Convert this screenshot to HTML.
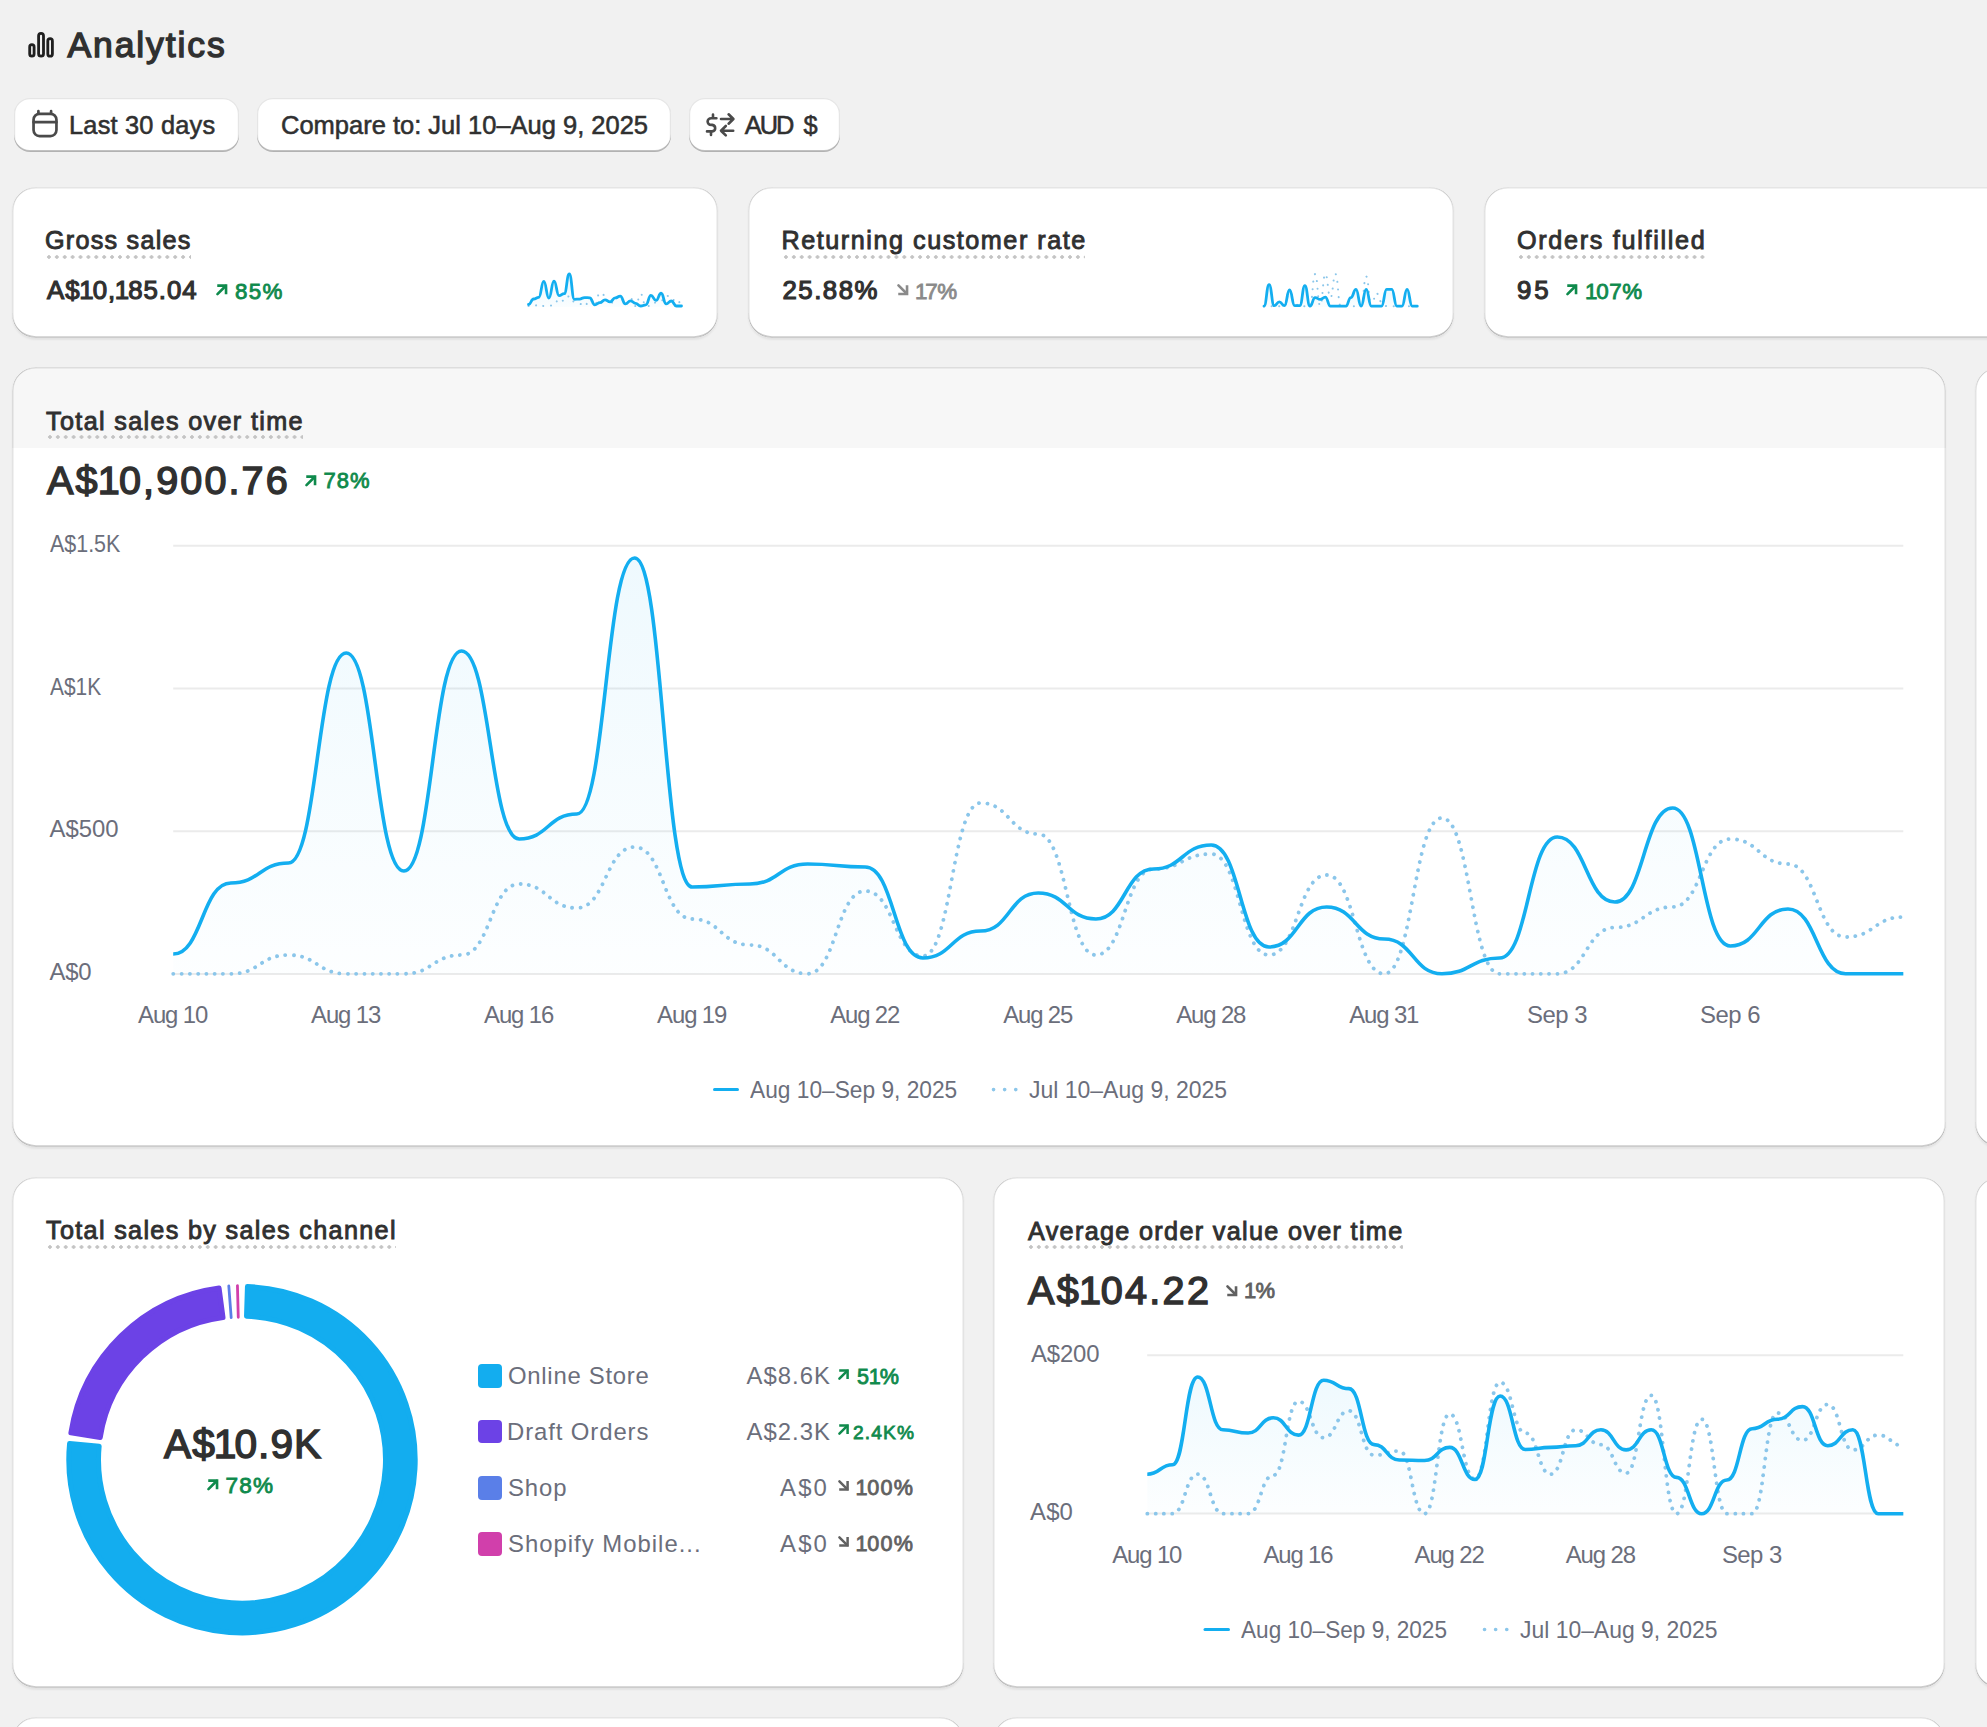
<!DOCTYPE html>
<html><head><meta charset="utf-8"><title>Analytics</title>
<style>
html,body{margin:0;padding:0;}
body{width:1987px;height:1727px;overflow:hidden;background:#f1f1f1;position:relative;font-family:"Liberation Sans",sans-serif;}
.t{position:absolute;white-space:nowrap;line-height:1.117;}
.n1{margin:0 -0.07em 0 -0.05em;}
.card{position:absolute;background:#fff;border-radius:24px;box-shadow:0 1.5px 2px rgba(0,0,0,.06);overflow:hidden;}
.card::after{content:'';position:absolute;left:0;top:0;right:0;bottom:0;border-radius:24px;box-shadow:inset 1.5px 0 0 rgba(0,0,0,.11),inset -1.5px 0 0 rgba(0,0,0,.11),inset 0 -1.8px 0 rgba(0,0,0,.2),inset 0 1.5px 0 rgba(0,0,0,.1);}
.btn{position:absolute;background:#fff;border-radius:16px;box-shadow:inset 0 -2px 0 rgba(0,0,0,.22),inset 0 0 0 1.2px rgba(0,0,0,.1);}
svg{position:absolute;}
</style></head><body>
<svg style="left:0;top:0" width="80" height="80" viewBox="0 0 80 80"><g fill="none" stroke="#1f1f1f" stroke-width="2.8"><rect x="29.7" y="44.7" width="4.4" height="11.5" rx="2.2"/><rect x="38.6" y="33.4" width="4.9" height="22.8" rx="2.45"/><rect x="47.8" y="38.6" width="4.6" height="17.6" rx="2.3"/></g></svg>
<div class="t" id="k0" style="left:67.5px;top:26.06px;font-size:35.52px;color:#303030;letter-spacing:1.88px;-webkit-text-stroke:1.37px #303030;">Analytics</div>
<div class="btn" style="left:13.6px;top:97.7px;width:225.3px;height:54px;"></div>
<div class="btn" style="left:256.6px;top:97.7px;width:414.6px;height:54px;"></div>
<div class="btn" style="left:688.7px;top:97.7px;width:151.6px;height:54px;"></div>
<svg style="left:0;top:90px" width="80" height="60" viewBox="0 90 80 60"><g fill="none" stroke="#4a4a4a" stroke-width="2.7" stroke-linecap="round"><rect x="33.55" y="113.8" width="22.9" height="22.3" rx="6"/><path d="M33.6 122.2H56.4M38.4 111.2v2M51.1 111.2v2"/></g></svg>
<div class="t" id="k1" style="left:69px;top:110.65px;font-size:25.4px;color:#303030;letter-spacing:0.2px;-webkit-text-stroke:0.55px #303030;">Last 30 days</div>
<div class="t" id="k2" style="left:280.5px;top:110.65px;font-size:25.4px;color:#303030;-webkit-text-stroke:0.55px #303030;transform:scaleX(1.0040);transform-origin:0 0;">Compare to: Jul 10–Aug 9, 2025</div>
<svg style="left:690px;top:100px" width="60" height="50" viewBox="690 100 60 50"><g fill="none" stroke="#4a4a4a" stroke-width="2.6" stroke-linecap="round" stroke-linejoin="round"><path d="M716.4 118.3H711.2A3.6 3.3 0 0 0 711.2 124.9H712.2A3.6 3.3 0 0 1 712.2 131.4H707M713 114.6V118.3M711 131.4V135"/><path d="M721 119H733.2M728.6 114.3L733.4 119L728.6 123.7M733.2 130.7H721M725.8 126L721 130.7L725.8 135.4"/></g></svg>
<div class="t" id="k3" style="left:744.8px;top:110.65px;font-size:25.4px;color:#303030;letter-spacing:-2px;-webkit-text-stroke:0.55px #303030;">AUD</div>
<div class="t" id="k4" style="left:803.4px;top:110.65px;font-size:25.4px;color:#303030;-webkit-text-stroke:0.55px #303030;">$</div>
<div class="card" style="left:11.5px;top:186.5px;width:706.5px;height:151px;"></div>
<div class="card" style="left:747.5px;top:186.5px;width:706.5px;height:151px;"></div>
<div class="card" style="left:1483.5px;top:186.5px;width:706.5px;height:151px;"></div>
<div class="t" id="k5" style="left:45px;top:226.38px;font-size:25.2px;color:#303030;letter-spacing:1.24px;-webkit-text-stroke:0.9px #303030;">Gross sales</div>
<div style="position:absolute;left:45.2px;top:255px;width:145.8px;height:4px;background-image:radial-gradient(circle, #c4c4c4 1.5px, transparent 2px);background-size:7.9px 4px;background-repeat:repeat-x;"></div>
<div class="t" id="k6" style="left:47px;top:275.71px;font-size:25.8px;color:#303030;letter-spacing:0.94px;-webkit-text-stroke:1.17px #303030;">A$<span class="n1">1</span>0,<span class="n1">1</span>85.04</div>
<svg style="position:absolute;left:215.5px;top:284.2px;overflow:visible" width="11.5" height="11.5" viewBox="0 0 11 11"><path d="M1.4 9.7 L9.2 1.9" stroke="#0f8a4c" stroke-width="2.5" stroke-linecap="round" fill="none"/><path d="M1.2 1.5 H9.6 V9.9" stroke="#0f8a4c" stroke-width="2.5" stroke-linecap="butt" stroke-linejoin="miter" fill="none"/></svg>
<div class="t" id="k7" style="left:235px;top:278.89px;font-size:22.37px;color:#0f8a4c;letter-spacing:1.3px;-webkit-text-stroke:0.85px #0f8a4c;">85%</div>
<div class="t" id="k8" style="left:781.5px;top:226.38px;font-size:25.2px;color:#303030;letter-spacing:1.53px;-webkit-text-stroke:0.9px #303030;">Returning customer rate</div>
<div style="position:absolute;left:781.5px;top:255px;width:303.5px;height:4px;background-image:radial-gradient(circle, #c4c4c4 1.5px, transparent 2px);background-size:7.9px 4px;background-repeat:repeat-x;"></div>
<div class="t" id="k9" style="left:782.5px;top:275.71px;font-size:25.8px;color:#303030;letter-spacing:1.48px;-webkit-text-stroke:1.17px #303030;">25.88%</div>
<svg style="position:absolute;left:896.8px;top:284.2px;overflow:visible" width="11.5" height="11.5" viewBox="0 0 11 11"><path d="M1.4 1.3 L9.2 9.1" stroke="#8a8a8a" stroke-width="2.5" stroke-linecap="round" fill="none"/><path d="M1.2 9.5 H9.6 V1.1" stroke="#8a8a8a" stroke-width="2.5" stroke-linecap="butt" stroke-linejoin="miter" fill="none"/></svg>
<div class="t" id="k10" style="left:916px;top:278.89px;font-size:22.37px;color:#8a8a8a;letter-spacing:-0.5px;-webkit-text-stroke:0.85px #8a8a8a;"><span class="n1">1</span>7%</div>
<div class="t" id="k11" style="left:1517px;top:226.38px;font-size:25.2px;color:#303030;letter-spacing:1.69px;-webkit-text-stroke:0.9px #303030;">Orders fulfilled</div>
<div style="position:absolute;left:1517px;top:255px;width:188px;height:4px;background-image:radial-gradient(circle, #c4c4c4 1.5px, transparent 2px);background-size:7.9px 4px;background-repeat:repeat-x;"></div>
<div class="t" id="k12" style="left:1517px;top:275.71px;font-size:25.8px;color:#303030;letter-spacing:3px;-webkit-text-stroke:1.17px #303030;">95</div>
<svg style="position:absolute;left:1566px;top:284.2px;overflow:visible" width="11.5" height="11.5" viewBox="0 0 11 11"><path d="M1.4 9.7 L9.2 1.9" stroke="#0f8a4c" stroke-width="2.5" stroke-linecap="round" fill="none"/><path d="M1.2 1.5 H9.6 V9.9" stroke="#0f8a4c" stroke-width="2.5" stroke-linecap="butt" stroke-linejoin="miter" fill="none"/></svg>
<div class="t" id="k13" style="left:1586px;top:278.89px;font-size:22.37px;color:#0f8a4c;letter-spacing:0.53px;-webkit-text-stroke:0.85px #0f8a4c;"><span class="n1">1</span>07%</div>
<svg style="left:520px;top:260px" width="170" height="55" viewBox="520 260 170 55"><defs><linearGradient id="g1" x1="0" y1="0" x2="0" y2="1"><stop offset="0" stop-color="#13aef0" stop-opacity="0.10"/><stop offset="1" stop-color="#13aef0" stop-opacity="0.02"/></linearGradient></defs><path d="M528.5 304.48C531.05 304.48 531.05 299.01 533.6 299.01C536.15 299.01 536.15 297.47 538.7 297.47C541.25 297.47 541.25 281.31 543.8 281.31C546.35 281.31 546.35 298.09 548.9 298.09C551.45 298.09 551.45 281.16 554 281.16C556.55 281.16 556.55 295.63 559.1 295.63C561.65 295.63 561.65 293.7 564.2 293.7C566.75 293.7 566.75 274 569.3 274C571.85 274 571.85 299.32 574.4 299.32C576.95 299.32 576.95 299.09 579.5 299.09C582.05 299.09 582.05 297.55 584.6 297.55C587.15 297.55 587.15 297.78 589.7 297.78C592.25 297.78 592.25 304.78 594.8 304.78C597.35 304.78 597.35 302.71 599.9 302.71C602.45 302.71 602.45 299.78 605 299.78C607.55 299.78 607.55 301.78 610.1 301.78C612.65 301.78 612.65 297.93 615.2 297.93C617.75 297.93 617.75 296.09 620.3 296.09C622.85 296.09 622.85 303.94 625.4 303.94C627.95 303.94 627.95 300.86 630.5 300.86C633.05 300.86 633.05 303.32 635.6 303.32C638.15 303.32 638.15 306 640.7 306C643.25 306 643.25 304.78 645.8 304.78C648.35 304.78 648.35 295.47 650.9 295.47C653.45 295.47 653.45 300.47 656 300.47C658.55 300.47 658.55 293.24 661.1 293.24C663.65 293.24 663.65 303.86 666.2 303.86C668.75 303.86 668.75 301.01 671.3 301.01C673.85 301.01 673.85 306 676.4 306C678.95 306 678.95 306 681.5 306L681.5 307 L528.5 307 Z" fill="url(#g1)"/><path d="M528.5 306C531.05 306 531.05 306 533.6 306C536.15 306 536.15 304.55 538.7 304.55C541.25 304.55 541.25 306 543.8 306C546.35 306 546.35 306 548.9 306C551.45 306 551.45 304.55 554 304.55C556.55 304.55 556.55 299.09 559.1 299.09C561.65 299.09 561.65 300.94 564.2 300.94C566.75 300.94 566.75 296.24 569.3 296.24C571.85 296.24 571.85 301.78 574.4 301.78C576.95 301.78 576.95 303.78 579.5 303.78C582.05 303.78 582.05 306 584.6 306C587.15 306 587.15 299.63 589.7 299.63C592.25 299.63 592.25 304.63 594.8 304.63C597.35 304.63 597.35 292.86 599.9 292.86C602.45 292.86 602.45 295.24 605 295.24C607.55 295.24 607.55 304.55 610.1 304.55C612.65 304.55 612.65 297.93 615.2 297.93C617.75 297.93 617.75 296.78 620.3 296.78C622.85 296.78 622.85 304.55 625.4 304.55C627.95 304.55 627.95 298.4 630.5 298.4C633.05 298.4 633.05 306 635.6 306C638.15 306 638.15 294.01 640.7 294.01C643.25 294.01 643.25 306 645.8 306C648.35 306 648.35 306 650.9 306C653.45 306 653.45 302.44 656 302.44C658.55 302.44 658.55 300.86 661.1 300.86C663.65 300.86 663.65 295.63 666.2 295.63C668.75 295.63 668.75 297.55 671.3 297.55C673.85 297.55 673.85 303.17 676.4 303.17C678.95 303.17 678.95 301.63 681.5 301.63" fill="none" stroke="#8bc6ea" stroke-width="2" stroke-dasharray="0.1 7.5" stroke-linecap="round"/><path d="M528.5 304.48C531.05 304.48 531.05 299.01 533.6 299.01C536.15 299.01 536.15 297.47 538.7 297.47C541.25 297.47 541.25 281.31 543.8 281.31C546.35 281.31 546.35 298.09 548.9 298.09C551.45 298.09 551.45 281.16 554 281.16C556.55 281.16 556.55 295.63 559.1 295.63C561.65 295.63 561.65 293.7 564.2 293.7C566.75 293.7 566.75 274 569.3 274C571.85 274 571.85 299.32 574.4 299.32C576.95 299.32 576.95 299.09 579.5 299.09C582.05 299.09 582.05 297.55 584.6 297.55C587.15 297.55 587.15 297.78 589.7 297.78C592.25 297.78 592.25 304.78 594.8 304.78C597.35 304.78 597.35 302.71 599.9 302.71C602.45 302.71 602.45 299.78 605 299.78C607.55 299.78 607.55 301.78 610.1 301.78C612.65 301.78 612.65 297.93 615.2 297.93C617.75 297.93 617.75 296.09 620.3 296.09C622.85 296.09 622.85 303.94 625.4 303.94C627.95 303.94 627.95 300.86 630.5 300.86C633.05 300.86 633.05 303.32 635.6 303.32C638.15 303.32 638.15 306 640.7 306C643.25 306 643.25 304.78 645.8 304.78C648.35 304.78 648.35 295.47 650.9 295.47C653.45 295.47 653.45 300.47 656 300.47C658.55 300.47 658.55 293.24 661.1 293.24C663.65 293.24 663.65 303.86 666.2 303.86C668.75 303.86 668.75 301.01 671.3 301.01C673.85 301.01 673.85 306 676.4 306C678.95 306 678.95 306 681.5 306" fill="none" stroke="#13aef0" stroke-width="2.8" stroke-linecap="round" stroke-linejoin="round"/></svg>
<svg style="left:1256px;top:260px" width="170" height="55" viewBox="1256 260 170 55"><defs><linearGradient id="g2" x1="0" y1="0" x2="0" y2="1"><stop offset="0" stop-color="#13aef0" stop-opacity="0.10"/><stop offset="1" stop-color="#13aef0" stop-opacity="0.02"/></linearGradient></defs><path d="M1264 306.16C1266.55 306.16 1266.55 284.64 1269.11 284.64C1271.66 284.64 1271.66 305.68 1274.22 305.68C1276.78 305.68 1276.78 301.85 1279.33 301.85C1281.88 301.85 1281.88 305.68 1284.44 305.68C1286.99 305.68 1286.99 289.9 1289.55 289.9C1292.11 289.9 1292.11 305.68 1294.66 305.68C1297.22 305.68 1297.22 305.68 1299.77 305.68C1302.32 305.68 1302.32 285.6 1304.88 285.6C1307.43 285.6 1307.43 306.16 1309.99 306.16C1312.55 306.16 1312.55 297.55 1315.1 297.55C1317.65 297.55 1317.65 299.46 1320.21 299.46C1322.76 299.46 1322.76 297.07 1325.32 297.07C1327.88 297.07 1327.88 306.16 1330.43 306.16C1332.99 306.16 1332.99 306.16 1335.54 306.16C1338.09 306.16 1338.09 306.16 1340.65 306.16C1343.2 306.16 1343.2 306.16 1345.76 306.16C1348.32 306.16 1348.32 297.55 1350.87 297.55C1353.42 297.55 1353.42 289.42 1355.98 289.42C1358.53 289.42 1358.53 306.16 1361.09 306.16C1363.64 306.16 1363.64 289.42 1366.2 289.42C1368.76 289.42 1368.76 306.16 1371.31 306.16C1373.87 306.16 1373.87 306.16 1376.42 306.16C1378.97 306.16 1378.97 306.16 1381.53 306.16C1384.09 306.16 1384.09 289.42 1386.64 289.42C1389.19 289.42 1389.19 289.42 1391.75 289.42C1394.3 289.42 1394.3 306.16 1396.86 306.16C1399.41 306.16 1399.41 306.16 1401.97 306.16C1404.53 306.16 1404.53 289.42 1407.08 289.42C1409.63 289.42 1409.63 306.16 1412.19 306.16C1414.74 306.16 1414.74 306.16 1417.3 306.16L1417.3 307 L1264 307 Z" fill="url(#g2)"/><path d="M1264 306.16C1266.55 306.16 1266.55 306.16 1269.11 306.16C1271.66 306.16 1271.66 306.16 1274.22 306.16C1276.78 306.16 1276.78 306.16 1279.33 306.16C1281.88 306.16 1281.88 306.16 1284.44 306.16C1286.99 306.16 1286.99 291.34 1289.55 291.34C1292.11 291.34 1292.11 303.77 1294.66 303.77C1297.22 303.77 1297.22 306.16 1299.77 306.16C1302.32 306.16 1302.32 306.16 1304.88 306.16C1307.43 306.16 1307.43 306.16 1309.99 306.16C1312.55 306.16 1312.55 274.12 1315.1 274.12C1317.65 274.12 1317.65 305.68 1320.21 305.68C1322.76 305.68 1322.76 274.12 1325.32 274.12C1327.88 274.12 1327.88 297.55 1330.43 297.55C1332.99 297.55 1332.99 274.12 1335.54 274.12C1338.09 274.12 1338.09 306.16 1340.65 306.16C1343.2 306.16 1343.2 306.16 1345.76 306.16C1348.32 306.16 1348.32 306.16 1350.87 306.16C1353.42 306.16 1353.42 306.16 1355.98 306.16C1358.53 306.16 1358.53 306.16 1361.09 306.16C1363.64 306.16 1363.64 276.51 1366.2 276.51C1368.76 276.51 1368.76 306.16 1371.31 306.16C1373.87 306.16 1373.87 293.25 1376.42 293.25C1378.97 293.25 1378.97 301.85 1381.53 301.85C1384.09 301.85 1384.09 306.16 1386.64 306.16C1389.19 306.16 1389.19 306.16 1391.75 306.16C1394.3 306.16 1394.3 306.16 1396.86 306.16C1399.41 306.16 1399.41 306.16 1401.97 306.16C1404.53 306.16 1404.53 306.16 1407.08 306.16C1409.63 306.16 1409.63 306.16 1412.19 306.16C1414.74 306.16 1414.74 306.16 1417.3 306.16" fill="none" stroke="#8bc6ea" stroke-width="2" stroke-dasharray="0.1 7.5" stroke-linecap="round"/><path d="M1264 306.16C1266.55 306.16 1266.55 284.64 1269.11 284.64C1271.66 284.64 1271.66 305.68 1274.22 305.68C1276.78 305.68 1276.78 301.85 1279.33 301.85C1281.88 301.85 1281.88 305.68 1284.44 305.68C1286.99 305.68 1286.99 289.9 1289.55 289.9C1292.11 289.9 1292.11 305.68 1294.66 305.68C1297.22 305.68 1297.22 305.68 1299.77 305.68C1302.32 305.68 1302.32 285.6 1304.88 285.6C1307.43 285.6 1307.43 306.16 1309.99 306.16C1312.55 306.16 1312.55 297.55 1315.1 297.55C1317.65 297.55 1317.65 299.46 1320.21 299.46C1322.76 299.46 1322.76 297.07 1325.32 297.07C1327.88 297.07 1327.88 306.16 1330.43 306.16C1332.99 306.16 1332.99 306.16 1335.54 306.16C1338.09 306.16 1338.09 306.16 1340.65 306.16C1343.2 306.16 1343.2 306.16 1345.76 306.16C1348.32 306.16 1348.32 297.55 1350.87 297.55C1353.42 297.55 1353.42 289.42 1355.98 289.42C1358.53 289.42 1358.53 306.16 1361.09 306.16C1363.64 306.16 1363.64 289.42 1366.2 289.42C1368.76 289.42 1368.76 306.16 1371.31 306.16C1373.87 306.16 1373.87 306.16 1376.42 306.16C1378.97 306.16 1378.97 306.16 1381.53 306.16C1384.09 306.16 1384.09 289.42 1386.64 289.42C1389.19 289.42 1389.19 289.42 1391.75 289.42C1394.3 289.42 1394.3 306.16 1396.86 306.16C1399.41 306.16 1399.41 306.16 1401.97 306.16C1404.53 306.16 1404.53 289.42 1407.08 289.42C1409.63 289.42 1409.63 306.16 1412.19 306.16C1414.74 306.16 1414.74 306.16 1417.3 306.16" fill="none" stroke="#13aef0" stroke-width="2.8" stroke-linecap="round" stroke-linejoin="round"/></svg>
<div class="card" style="left:11.5px;top:366.5px;width:1934px;height:780px;"><div style="position:absolute;left:0;top:0;right:0;height:81.5px;background:#f7f7f7;"></div></div>
<div class="card" style="left:1975px;top:366.5px;width:400px;height:780px;"></div>
<div class="t" id="k14" style="left:46px;top:406.58px;font-size:25.2px;color:#303030;letter-spacing:1.35px;-webkit-text-stroke:0.9px #303030;">Total sales over time</div>
<div style="position:absolute;left:45.5px;top:435px;width:257.5px;height:4px;background-image:radial-gradient(circle, #c4c4c4 1.5px, transparent 2px);background-size:7.9px 4px;background-repeat:repeat-x;"></div>
<div class="t" id="k15" style="left:47px;top:458.42px;font-size:39.61px;color:#303030;letter-spacing:2.08px;-webkit-text-stroke:1.44px #303030;">A$<span class="n1">1</span>0,900.76</div>
<svg style="position:absolute;left:304.5px;top:474.5px;overflow:visible" width="11.5" height="11.5" viewBox="0 0 11 11"><path d="M1.4 9.7 L9.2 1.9" stroke="#0f8a4c" stroke-width="2.5" stroke-linecap="round" fill="none"/><path d="M1.2 1.5 H9.6 V9.9" stroke="#0f8a4c" stroke-width="2.5" stroke-linecap="butt" stroke-linejoin="miter" fill="none"/></svg>
<div class="t" id="k16" style="left:323.5px;top:468.74px;font-size:21.98px;color:#0f8a4c;letter-spacing:1px;-webkit-text-stroke:0.84px #0f8a4c;">78%</div>
<div class="t" id="k17" style="left:49.5px;top:531.07px;font-size:23.9px;color:#6b6e7b;transform:scaleX(0.8976);transform-origin:0 0;">A$1.5K</div>
<div class="t" id="k18" style="left:49.5px;top:673.77px;font-size:23.9px;color:#6b6e7b;transform:scaleX(0.8761);transform-origin:0 0;">A$1K</div>
<div class="t" id="k19" style="left:49.5px;top:816.47px;font-size:23.9px;color:#6b6e7b;">A$500</div>
<div class="t" id="k20" style="left:49.5px;top:959.17px;font-size:23.9px;color:#6b6e7b;letter-spacing:-0.2px;">A$0</div>
<svg style="left:0;top:500px" width="1987" height="560" viewBox="0 500 1987 560"><defs><linearGradient id="ga" x1="0" y1="0" x2="0" y2="1"><stop offset="0" stop-color="#13aef0" stop-opacity="0.07"/><stop offset="1" stop-color="#13aef0" stop-opacity="0.01"/></linearGradient></defs><path d="M173.2 545.8H1903.3" stroke="#ebebeb" stroke-width="2"/><path d="M173.2 688.5H1903.3" stroke="#ebebeb" stroke-width="2"/><path d="M173.2 831.2H1903.3" stroke="#ebebeb" stroke-width="2"/><path d="M173.2 973.9H1903.3" stroke="#ebebeb" stroke-width="2"/><path d="M173.2 954C202.03 954 202.03 883 230.87 883C259.7 883 259.7 863 288.54 863C317.38 863 317.38 653 346.21 653C375.04 653 375.04 871 403.88 871C432.71 871 432.71 651 461.55 651C490.38 651 490.38 839 519.22 839C548.05 839 548.05 814 576.89 814C605.72 814 605.72 558 634.56 558C663.39 558 663.39 887 692.23 887C721.06 887 721.06 884 749.9 884C778.73 884 778.73 864 807.57 864C836.4 864 836.4 867 865.24 867C894.07 867 894.07 958 922.91 958C951.74 958 951.74 931 980.58 931C1009.41 931 1009.41 893 1038.25 893C1067.09 893 1067.09 919 1095.92 919C1124.75 919 1124.75 869 1153.59 869C1182.42 869 1182.42 845 1211.26 845C1240.09 845 1240.09 947 1268.93 947C1297.76 947 1297.76 907 1326.6 907C1355.43 907 1355.43 939 1384.27 939C1413.11 939 1413.11 973.8 1441.94 973.8C1470.77 973.8 1470.77 958 1499.61 958C1528.44 958 1528.44 837 1557.28 837C1586.11 837 1586.11 902 1614.95 902C1643.78 902 1643.78 808 1672.62 808C1701.45 808 1701.45 946 1730.29 946C1759.12 946 1759.12 909 1787.96 909C1816.79 909 1816.79 973.8 1845.63 973.8C1874.46 973.8 1874.46 973.8 1903.3 973.8L1903.3 973.9 L173.2 973.9 Z" fill="url(#ga)"/><path d="M173.2 973.8C202.03 973.8 202.03 973.8 230.87 973.8C259.7 973.8 259.7 955 288.54 955C317.38 955 317.38 973.8 346.21 973.8C375.04 973.8 375.04 973.8 403.88 973.8C432.71 973.8 432.71 955 461.55 955C490.38 955 490.38 884 519.22 884C548.05 884 548.05 908 576.89 908C605.72 908 605.72 847 634.56 847C663.39 847 663.39 919 692.23 919C721.06 919 721.06 945 749.9 945C778.73 945 778.73 973.8 807.57 973.8C836.4 973.8 836.4 891 865.24 891C894.07 891 894.07 956 922.91 956C951.74 956 951.74 803 980.58 803C1009.41 803 1009.41 834 1038.25 834C1067.09 834 1067.09 955 1095.92 955C1124.75 955 1124.75 869 1153.59 869C1182.42 869 1182.42 854 1211.26 854C1240.09 854 1240.09 955 1268.93 955C1297.76 955 1297.76 875 1326.6 875C1355.43 875 1355.43 973.8 1384.27 973.8C1413.11 973.8 1413.11 818 1441.94 818C1470.77 818 1470.77 973.8 1499.61 973.8C1528.44 973.8 1528.44 973.8 1557.28 973.8C1586.11 973.8 1586.11 927.5 1614.95 927.5C1643.78 927.5 1643.78 907 1672.62 907C1701.45 907 1701.45 839 1730.29 839C1759.12 839 1759.12 864 1787.96 864C1816.79 864 1816.79 937 1845.63 937C1874.46 937 1874.46 917 1903.3 917" fill="none" stroke="#8bc6ea" stroke-width="3.8" stroke-dasharray="0.1 8.2" stroke-linecap="round"/><path d="M173.2 954C202.03 954 202.03 883 230.87 883C259.7 883 259.7 863 288.54 863C317.38 863 317.38 653 346.21 653C375.04 653 375.04 871 403.88 871C432.71 871 432.71 651 461.55 651C490.38 651 490.38 839 519.22 839C548.05 839 548.05 814 576.89 814C605.72 814 605.72 558 634.56 558C663.39 558 663.39 887 692.23 887C721.06 887 721.06 884 749.9 884C778.73 884 778.73 864 807.57 864C836.4 864 836.4 867 865.24 867C894.07 867 894.07 958 922.91 958C951.74 958 951.74 931 980.58 931C1009.41 931 1009.41 893 1038.25 893C1067.09 893 1067.09 919 1095.92 919C1124.75 919 1124.75 869 1153.59 869C1182.42 869 1182.42 845 1211.26 845C1240.09 845 1240.09 947 1268.93 947C1297.76 947 1297.76 907 1326.6 907C1355.43 907 1355.43 939 1384.27 939C1413.11 939 1413.11 973.8 1441.94 973.8C1470.77 973.8 1470.77 958 1499.61 958C1528.44 958 1528.44 837 1557.28 837C1586.11 837 1586.11 902 1614.95 902C1643.78 902 1643.78 808 1672.62 808C1701.45 808 1701.45 946 1730.29 946C1759.12 946 1759.12 909 1787.96 909C1816.79 909 1816.79 973.8 1845.63 973.8C1874.46 973.8 1874.46 973.8 1903.3 973.8" fill="none" stroke="#13aef0" stroke-width="3.6" stroke-linecap="butt" stroke-linejoin="round"/></svg>
<div class="t" style="left:172.65px;top:1002.27px;width:0;font-size:23.9px;color:#6b6e7b;display:flex;justify-content:center;letter-spacing:-1.1px;"><span>Aug 10</span></div>
<div class="t" style="left:345.66px;top:1002.27px;width:0;font-size:23.9px;color:#6b6e7b;display:flex;justify-content:center;letter-spacing:-1.1px;"><span>Aug 13</span></div>
<div class="t" style="left:518.67px;top:1002.27px;width:0;font-size:23.9px;color:#6b6e7b;display:flex;justify-content:center;letter-spacing:-1.1px;"><span>Aug 16</span></div>
<div class="t" style="left:691.68px;top:1002.27px;width:0;font-size:23.9px;color:#6b6e7b;display:flex;justify-content:center;letter-spacing:-1.1px;"><span>Aug 19</span></div>
<div class="t" style="left:864.69px;top:1002.27px;width:0;font-size:23.9px;color:#6b6e7b;display:flex;justify-content:center;letter-spacing:-1.1px;"><span>Aug 22</span></div>
<div class="t" style="left:1037.7px;top:1002.27px;width:0;font-size:23.9px;color:#6b6e7b;display:flex;justify-content:center;letter-spacing:-1.1px;"><span>Aug 25</span></div>
<div class="t" style="left:1210.71px;top:1002.27px;width:0;font-size:23.9px;color:#6b6e7b;display:flex;justify-content:center;letter-spacing:-1.1px;"><span>Aug 28</span></div>
<div class="t" style="left:1383.72px;top:1002.27px;width:0;font-size:23.9px;color:#6b6e7b;display:flex;justify-content:center;letter-spacing:-1.1px;"><span>Aug 31</span></div>
<div class="t" style="left:1557.03px;top:1002.27px;width:0;font-size:23.9px;color:#6b6e7b;display:flex;justify-content:center;letter-spacing:-0.5px;"><span>Sep 3</span></div>
<div class="t" style="left:1730.04px;top:1002.27px;width:0;font-size:23.9px;color:#6b6e7b;display:flex;justify-content:center;letter-spacing:-0.5px;"><span>Sep 6</span></div>
<svg style="left:700px;top:1080px" width="340" height="20" viewBox="700 1080 340 20"><path d="M714.5 1089.6H737.5" stroke="#13aef0" stroke-width="3" stroke-linecap="round"/><path d="M993.5 1089.6H1016" stroke="#8bc6ea" stroke-width="3.6" stroke-dasharray="0.1 11" stroke-linecap="round"/></svg>
<div class="t" id="k21" style="left:750px;top:1077.58px;font-size:23.2px;color:#6b6e7b;transform:scaleX(0.9800);transform-origin:0 0;">Aug 10–Sep 9, 2025</div>
<div class="t" id="k22" style="left:1029px;top:1077.58px;font-size:23.2px;color:#6b6e7b;transform:scaleX(0.9911);transform-origin:0 0;">Jul 10–Aug 9, 2025</div>
<div class="card" style="left:11.5px;top:1176.5px;width:952px;height:511px;"></div>
<div class="card" style="left:992.5px;top:1176.5px;width:952.5px;height:511px;"></div>
<div class="card" style="left:1975px;top:1176.5px;width:400px;height:511px;"></div>
<div class="card" style="left:11.5px;top:1716.5px;width:952px;height:200px;"></div>
<div class="card" style="left:992.5px;top:1716.5px;width:952.5px;height:200px;"></div>
<div class="t" id="k23" style="left:46px;top:1216.18px;font-size:25.2px;color:#303030;letter-spacing:1.33px;-webkit-text-stroke:0.9px #303030;">Total sales by sales channel</div>
<div style="position:absolute;left:45.5px;top:1245px;width:350.5px;height:4px;background-image:radial-gradient(circle, #c4c4c4 1.5px, transparent 2px);background-size:7.9px 4px;background-repeat:repeat-x;"></div>
<svg style="left:40px;top:1260px" width="420" height="400" viewBox="40 1260 420 400"><path d="M247.45 1286.59 A173.2 173.2 0 1 1 69.57 1443.41 L99.14 1446.21 A143.5 143.5 0 1 0 246.52 1316.27 Z" fill="#13adef" stroke="#13adef" stroke-width="5" stroke-linejoin="round"/><path d="M70.89 1432.89 A173.2 173.2 0 0 1 219.08 1288.02 L223.01 1317.46 A143.5 143.5 0 0 0 100.23 1437.49 Z" fill="#6c42e6" stroke="#6c42e6" stroke-width="5" stroke-linejoin="round"/><path d="M228.79 1286 L231.19 1317.61" stroke="#5a7fe8" stroke-width="2.8" stroke-linecap="round"/><path d="M237.44 1285.56 L238.27 1317.25" stroke="#d13fab" stroke-width="2.8" stroke-linecap="round"/></svg>
<div class="t" id="k24" style="left:164px;top:1422.17px;font-size:40.68px;color:#303030;letter-spacing:1px;-webkit-text-stroke:1.46px #303030;">A$<span class="n1">1</span>0.9K</div>
<svg style="position:absolute;left:206.8px;top:1478.5px;overflow:visible" width="11.5" height="11.5" viewBox="0 0 11 11"><path d="M1.4 9.7 L9.2 1.9" stroke="#0f8a4c" stroke-width="2.5" stroke-linecap="round" fill="none"/><path d="M1.2 1.5 H9.6 V9.9" stroke="#0f8a4c" stroke-width="2.5" stroke-linecap="butt" stroke-linejoin="miter" fill="none"/></svg>
<div class="t" id="k25" style="left:225.5px;top:1472.92px;font-size:22.56px;color:#0f8a4c;letter-spacing:1.2px;-webkit-text-stroke:0.85px #0f8a4c;">78%</div>
<div style="position:absolute;left:478.1px;top:1364.2px;width:23.7px;height:23.5px;border-radius:4px;background:#13adef"></div>
<div class="t" id="k26" style="left:508px;top:1362.97px;font-size:23.9px;color:#6b6e7b;letter-spacing:0.73px;">Online Store</div>
<div class="t" id="k27" style="left:746.5px;top:1362.97px;font-size:23.9px;color:#6b6e7b;letter-spacing:1px;">A$8.6K</div>
<svg style="position:absolute;left:837.5px;top:1368.5px;overflow:visible" width="11" height="11" viewBox="0 0 11 11"><path d="M1.4 9.7 L9.2 1.9" stroke="#0f8a4c" stroke-width="2.5" stroke-linecap="round" fill="none"/><path d="M1.2 1.5 H9.6 V9.9" stroke="#0f8a4c" stroke-width="2.5" stroke-linecap="butt" stroke-linejoin="miter" fill="none"/></svg>
<div class="t" id="k28" style="left:857px;top:1364.58px;font-size:21.59px;color:#0f8a4c;letter-spacing:0.7px;-webkit-text-stroke:0.83px #0f8a4c;">5<span class="n1">1</span>%</div>
<div style="position:absolute;left:478.1px;top:1419.8px;width:23.7px;height:23.5px;border-radius:4px;background:#6c42e6"></div>
<div class="t" id="k29" style="left:507px;top:1418.57px;font-size:23.9px;color:#6b6e7b;letter-spacing:0.91px;">Draft Orders</div>
<div class="t" id="k30" style="left:746.5px;top:1418.57px;font-size:23.9px;color:#6b6e7b;letter-spacing:1px;">A$2.3K</div>
<svg style="position:absolute;left:837.5px;top:1424.1px;overflow:visible" width="11" height="11" viewBox="0 0 11 11"><path d="M1.4 9.7 L9.2 1.9" stroke="#0f8a4c" stroke-width="2.5" stroke-linecap="round" fill="none"/><path d="M1.2 1.5 H9.6 V9.9" stroke="#0f8a4c" stroke-width="2.5" stroke-linecap="butt" stroke-linejoin="miter" fill="none"/></svg>
<div class="t" id="k31" style="left:853px;top:1422.35px;font-size:19.16px;color:#0f8a4c;letter-spacing:1.15px;-webkit-text-stroke:0.79px #0f8a4c;">2.4K%</div>
<div style="position:absolute;left:478.1px;top:1476px;width:23.7px;height:23.5px;border-radius:4px;background:#5a7fe8"></div>
<div class="t" id="k32" style="left:508px;top:1474.77px;font-size:23.9px;color:#6b6e7b;letter-spacing:0.93px;">Shop</div>
<div class="t" id="k33" style="left:780px;top:1474.77px;font-size:23.9px;color:#6b6e7b;letter-spacing:2.2px;">A$0</div>
<svg style="position:absolute;left:837.5px;top:1480.3px;overflow:visible" width="11" height="11" viewBox="0 0 11 11"><path d="M1.4 1.3 L9.2 9.1" stroke="#616161" stroke-width="2.5" stroke-linecap="round" fill="none"/><path d="M1.2 9.5 H9.6 V1.1" stroke="#616161" stroke-width="2.5" stroke-linecap="butt" stroke-linejoin="miter" fill="none"/></svg>
<div class="t" id="k34" style="left:856.5px;top:1476.38px;font-size:21.59px;color:#616161;letter-spacing:1.27px;-webkit-text-stroke:0.83px #616161;"><span class="n1">1</span>00%</div>
<div style="position:absolute;left:478.1px;top:1532px;width:23.7px;height:23.5px;border-radius:4px;background:#d13fab"></div>
<div class="t" id="k35" style="left:508px;top:1530.77px;font-size:23.9px;color:#6b6e7b;letter-spacing:1px;">Shopify Mobile...</div>
<div class="t" id="k36" style="left:780px;top:1530.77px;font-size:23.9px;color:#6b6e7b;letter-spacing:2.2px;">A$0</div>
<svg style="position:absolute;left:837.5px;top:1536.3px;overflow:visible" width="11" height="11" viewBox="0 0 11 11"><path d="M1.4 1.3 L9.2 9.1" stroke="#616161" stroke-width="2.5" stroke-linecap="round" fill="none"/><path d="M1.2 9.5 H9.6 V1.1" stroke="#616161" stroke-width="2.5" stroke-linecap="butt" stroke-linejoin="miter" fill="none"/></svg>
<div class="t" id="k37" style="left:856.5px;top:1532.38px;font-size:21.59px;color:#616161;letter-spacing:1.27px;-webkit-text-stroke:0.83px #616161;"><span class="n1">1</span>00%</div>
<div class="t" id="k38" style="left:1028px;top:1216.68px;font-size:25.2px;color:#303030;letter-spacing:1.33px;-webkit-text-stroke:0.9px #303030;">Average order value over time</div>
<div style="position:absolute;left:1026.5px;top:1244.8px;width:376.5px;height:4px;background-image:radial-gradient(circle, #c4c4c4 1.5px, transparent 2px);background-size:7.9px 4px;background-repeat:repeat-x;"></div>
<div class="t" id="k39" style="left:1028px;top:1268.42px;font-size:39.61px;color:#303030;letter-spacing:2.29px;-webkit-text-stroke:1.44px #303030;">A$<span class="n1">1</span>04.22</div>
<svg style="position:absolute;left:1226px;top:1284.5px;overflow:visible" width="11.5" height="11.5" viewBox="0 0 11 11"><path d="M1.4 1.3 L9.2 9.1" stroke="#616161" stroke-width="2.5" stroke-linecap="round" fill="none"/><path d="M1.2 9.5 H9.6 V1.1" stroke="#616161" stroke-width="2.5" stroke-linecap="butt" stroke-linejoin="miter" fill="none"/></svg>
<div class="t" id="k40" style="left:1245px;top:1278.54px;font-size:21.98px;color:#616161;letter-spacing:1px;-webkit-text-stroke:0.84px #616161;"><span class="n1">1</span>%</div>
<div class="t" id="k41" style="left:1031px;top:1340.97px;font-size:23.9px;color:#6b6e7b;letter-spacing:-0.15px;">A$200</div>
<div class="t" id="k42" style="left:1030px;top:1499.27px;font-size:23.9px;color:#6b6e7b;letter-spacing:0.2px;">A$0</div>
<svg style="left:1100px;top:1340px" width="830" height="190" viewBox="1100 1340 830 190"><defs><linearGradient id="gb" x1="0" y1="0" x2="0" y2="1"><stop offset="0" stop-color="#13aef0" stop-opacity="0.07"/><stop offset="1" stop-color="#13aef0" stop-opacity="0.01"/></linearGradient></defs><path d="M1147.2 1355.3H1903.3" stroke="#ebebeb" stroke-width="2"/><path d="M1147.2 1513.6H1903.3" stroke="#ebebeb" stroke-width="2"/><path d="M1147.3 1474.2C1159.9 1474.2 1159.9 1464.7 1172.5 1464.7C1185.1 1464.7 1185.1 1377 1197.7 1377C1210.3 1377 1210.3 1429.8 1222.9 1429.8C1235.5 1429.8 1235.5 1433 1248.1 1433C1260.7 1433 1260.7 1417.8 1273.3 1417.8C1285.9 1417.8 1285.9 1435.1 1298.5 1435.1C1311.1 1435.1 1311.1 1380.2 1323.7 1380.2C1336.3 1380.2 1336.3 1388.6 1348.9 1388.6C1361.5 1388.6 1361.5 1444.6 1374.1 1444.6C1386.7 1444.6 1386.7 1460 1399.3 1460C1411.9 1460 1411.9 1460.5 1424.5 1460.5C1437.1 1460.5 1437.1 1447.4 1449.7 1447.4C1462.3 1447.4 1462.3 1479.5 1474.9 1479.5C1487.5 1479.5 1487.5 1396 1500.1 1396C1512.7 1396 1512.7 1449.5 1525.3 1449.5C1537.9 1449.5 1537.9 1447.4 1550.5 1447.4C1563.1 1447.4 1563.1 1445.7 1575.7 1445.7C1588.3 1445.7 1588.3 1429.8 1600.9 1429.8C1613.5 1429.8 1613.5 1449.9 1626.1 1449.9C1638.7 1449.9 1638.7 1429.8 1651.3 1429.8C1663.9 1429.8 1663.9 1477.4 1676.5 1477.4C1689.1 1477.4 1689.1 1513.7 1701.7 1513.7C1714.3 1513.7 1714.3 1480 1726.9 1480C1739.5 1480 1739.5 1428.8 1752.1 1428.8C1764.7 1428.8 1764.7 1419.3 1777.3 1419.3C1789.9 1419.3 1789.9 1406.6 1802.5 1406.6C1815.1 1406.6 1815.1 1445.7 1827.7 1445.7C1840.3 1445.7 1840.3 1429.8 1852.9 1429.8C1865.5 1429.8 1865.5 1513.7 1878.1 1513.7C1890.7 1513.7 1890.7 1513.7 1903.3 1513.7L1903.3 1513.6 L1147.3 1513.6 Z" fill="url(#gb)"/><path d="M1147.3 1513.7C1159.9 1513.7 1159.9 1513.7 1172.5 1513.7C1185.1 1513.7 1185.1 1474.2 1197.7 1474.2C1210.3 1474.2 1210.3 1513.7 1222.9 1513.7C1235.5 1513.7 1235.5 1513.7 1248.1 1513.7C1260.7 1513.7 1260.7 1475.3 1273.3 1475.3C1285.9 1475.3 1285.9 1401.3 1298.5 1401.3C1311.1 1401.3 1311.1 1437.7 1323.7 1437.7C1336.3 1437.7 1336.3 1410.8 1348.9 1410.8C1361.5 1410.8 1361.5 1455.2 1374.1 1455.2C1386.7 1455.2 1386.7 1451 1399.3 1451C1411.9 1451 1411.9 1513.7 1424.5 1513.7C1437.1 1513.7 1437.1 1414 1449.7 1414C1462.3 1414 1462.3 1479 1474.9 1479C1487.5 1479 1487.5 1382.3 1500.1 1382.3C1512.7 1382.3 1512.7 1433 1525.3 1433C1537.9 1433 1537.9 1474.2 1550.5 1474.2C1563.1 1474.2 1563.1 1429.8 1575.7 1429.8C1588.3 1429.8 1588.3 1444.6 1600.9 1444.6C1613.5 1444.6 1613.5 1473.2 1626.1 1473.2C1638.7 1473.2 1638.7 1395.4 1651.3 1395.4C1663.9 1395.4 1663.9 1513.7 1676.5 1513.7C1689.1 1513.7 1689.1 1419.3 1701.7 1419.3C1714.3 1419.3 1714.3 1513.7 1726.9 1513.7C1739.5 1513.7 1739.5 1513.7 1752.1 1513.7C1764.7 1513.7 1764.7 1412.9 1777.3 1412.9C1789.9 1412.9 1789.9 1440.4 1802.5 1440.4C1815.1 1440.4 1815.1 1404.5 1827.7 1404.5C1840.3 1404.5 1840.3 1449.9 1852.9 1449.9C1865.5 1449.9 1865.5 1435.1 1878.1 1435.1C1890.7 1435.1 1890.7 1445.7 1903.3 1445.7" fill="none" stroke="#8bc6ea" stroke-width="3.8" stroke-dasharray="0.1 8.2" stroke-linecap="round"/><path d="M1147.3 1474.2C1159.9 1474.2 1159.9 1464.7 1172.5 1464.7C1185.1 1464.7 1185.1 1377 1197.7 1377C1210.3 1377 1210.3 1429.8 1222.9 1429.8C1235.5 1429.8 1235.5 1433 1248.1 1433C1260.7 1433 1260.7 1417.8 1273.3 1417.8C1285.9 1417.8 1285.9 1435.1 1298.5 1435.1C1311.1 1435.1 1311.1 1380.2 1323.7 1380.2C1336.3 1380.2 1336.3 1388.6 1348.9 1388.6C1361.5 1388.6 1361.5 1444.6 1374.1 1444.6C1386.7 1444.6 1386.7 1460 1399.3 1460C1411.9 1460 1411.9 1460.5 1424.5 1460.5C1437.1 1460.5 1437.1 1447.4 1449.7 1447.4C1462.3 1447.4 1462.3 1479.5 1474.9 1479.5C1487.5 1479.5 1487.5 1396 1500.1 1396C1512.7 1396 1512.7 1449.5 1525.3 1449.5C1537.9 1449.5 1537.9 1447.4 1550.5 1447.4C1563.1 1447.4 1563.1 1445.7 1575.7 1445.7C1588.3 1445.7 1588.3 1429.8 1600.9 1429.8C1613.5 1429.8 1613.5 1449.9 1626.1 1449.9C1638.7 1449.9 1638.7 1429.8 1651.3 1429.8C1663.9 1429.8 1663.9 1477.4 1676.5 1477.4C1689.1 1477.4 1689.1 1513.7 1701.7 1513.7C1714.3 1513.7 1714.3 1480 1726.9 1480C1739.5 1480 1739.5 1428.8 1752.1 1428.8C1764.7 1428.8 1764.7 1419.3 1777.3 1419.3C1789.9 1419.3 1789.9 1406.6 1802.5 1406.6C1815.1 1406.6 1815.1 1445.7 1827.7 1445.7C1840.3 1445.7 1840.3 1429.8 1852.9 1429.8C1865.5 1429.8 1865.5 1513.7 1878.1 1513.7C1890.7 1513.7 1890.7 1513.7 1903.3 1513.7" fill="none" stroke="#13aef0" stroke-width="3.6" stroke-linecap="butt" stroke-linejoin="round"/></svg>
<div class="t" style="left:1146.75px;top:1542.37px;width:0;font-size:23.9px;color:#6b6e7b;display:flex;justify-content:center;letter-spacing:-1.1px;"><span>Aug 10</span></div>
<div class="t" style="left:1297.95px;top:1542.37px;width:0;font-size:23.9px;color:#6b6e7b;display:flex;justify-content:center;letter-spacing:-1.1px;"><span>Aug 16</span></div>
<div class="t" style="left:1449.15px;top:1542.37px;width:0;font-size:23.9px;color:#6b6e7b;display:flex;justify-content:center;letter-spacing:-1.1px;"><span>Aug 22</span></div>
<div class="t" style="left:1600.35px;top:1542.37px;width:0;font-size:23.9px;color:#6b6e7b;display:flex;justify-content:center;letter-spacing:-1.1px;"><span>Aug 28</span></div>
<div class="t" style="left:1751.85px;top:1542.37px;width:0;font-size:23.9px;color:#6b6e7b;display:flex;justify-content:center;letter-spacing:-0.5px;"><span>Sep 3</span></div>
<svg style="left:1190px;top:1620px" width="340" height="20" viewBox="1190 1620 340 20"><path d="M1205 1629.5H1228.5" stroke="#13aef0" stroke-width="3" stroke-linecap="round"/><path d="M1484.5 1629.5H1507" stroke="#8bc6ea" stroke-width="3.6" stroke-dasharray="0.1 11" stroke-linecap="round"/></svg>
<div class="t" id="k43" style="left:1241px;top:1617.58px;font-size:23.2px;color:#6b6e7b;transform:scaleX(0.9742);transform-origin:0 0;">Aug 10–Sep 9, 2025</div>
<div class="t" id="k44" style="left:1519.5px;top:1617.58px;font-size:23.2px;color:#6b6e7b;transform:scaleX(0.9880);transform-origin:0 0;">Jul 10–Aug 9, 2025</div>
</body></html>
